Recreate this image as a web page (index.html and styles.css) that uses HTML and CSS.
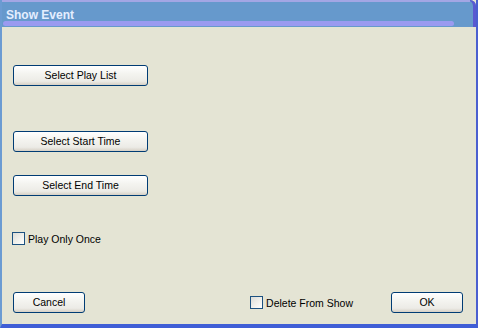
FILE: index.html
```html
<!DOCTYPE html>
<html>
<head>
<meta charset="utf-8">
<link rel="stylesheet" href="styles.css">
</head>
<body>
<div class="screen">
  <div class="window">
    <div class="titlebar">
      <div class="topline"></div>
      <div class="title">Show Event</div>
      <div class="stripe"></div>
    </div>
    <div class="content">
      <button class="btn btn-wide first">Select Play List</button>
      <button class="btn btn-wide second">Select Start Time</button>
      <button class="btn btn-wide third">Select End Time</button>
      <label class="check once"><span class="box"></span><span>Play Only Once</span></label>
      <div class="footer">
        <button class="btn btn-small">Cancel</button>
        <label class="check delete"><span class="box"></span><span>Delete From Show</span></label>
        <button class="btn btn-small">OK</button>
      </div>
    </div>
  </div>
  <div class="outside"></div>
</div>
</body>
</html>
```
FILE: styles.css
```css
html, body {
  margin: 0;
  padding: 0;
  background: #ffffff;
}
.screen {
  display: flex;
  width: 481px;
  height: 328px;
  overflow: hidden;
}
.window {
  width: 474px;
  height: 324px;
  border-left: 2px solid #6b9bd2;
  border-right: 2px solid #4a5fd0;
  border-bottom: 4px solid #3f5ed6;
  background: #e4e4d4;
  display: flex;
  flex-direction: column;
  font-family: "Liberation Sans", Arial, sans-serif;
  font-size: 10.5px;
  color: #000;
}
.outside {
  flex: 1;
  background: #ffffff;
}
.titlebar {
  height: 27px;
  background: #6699cc;
  display: flex;
  flex-direction: column;
  border-top-right-radius: 6px;
  box-shadow: inset -3px 0 0 #5a5ad0;
}
.topline {
  height: 2px;
  background: #a3a6e4;
  margin-right: 6px;
}
.title {
  margin-top: 6px;
  margin-left: 4px;
  height: 14px;
  line-height: 14px;
  font-weight: bold;
  font-size: 12px;
  color: #e4eeff;
  position: relative;
  z-index: 1;
}
.stripe {
  margin-top: -1px;
  margin-left: 1px;
  width: 451px;
  height: 5px;
  background: #9a9af0;
  border-radius: 3px;
}
.content {
  flex: 1;
  display: flex;
  flex-direction: column;
  align-items: flex-start;
  padding: 0 13px 0 11px;
}
.btn {
  font-family: "Liberation Sans", Arial, sans-serif;
  font-size: 10.5px;
  color: #000;
  border: 1px solid #003c74;
  border-radius: 3px;
  background: linear-gradient(#ffffff 0%, #f4f4f0 40%, #ecebe6 80%, #d6d0c5 100%);
  padding: 0;
  height: 21px;
  line-height: 19px;
  box-sizing: border-box;
}
.btn-wide {
  width: 135px;
}
.first { margin-top: 38px; }
.second { margin-top: 45px; }
.third { margin-top: 23px; }
.btn-small {
  width: 72px;
}
.check {
  display: flex;
  align-items: center;
  gap: 3px;
}
.once {
  margin-top: 36px;
  margin-left: -1px;
}
.box {
  width: 13px;
  height: 13px;
  box-sizing: border-box;
  border: 1px solid #1c5180;
  background: linear-gradient(135deg, #dcdcd7 0%, #f2f2ee 60%, #ffffff 100%);
}
.footer {
  margin-top: 47px;
  align-self: stretch;
  display: flex;
  align-items: center;
}
.delete {
  margin-left: auto;
  margin-right: 38px;
}
```
